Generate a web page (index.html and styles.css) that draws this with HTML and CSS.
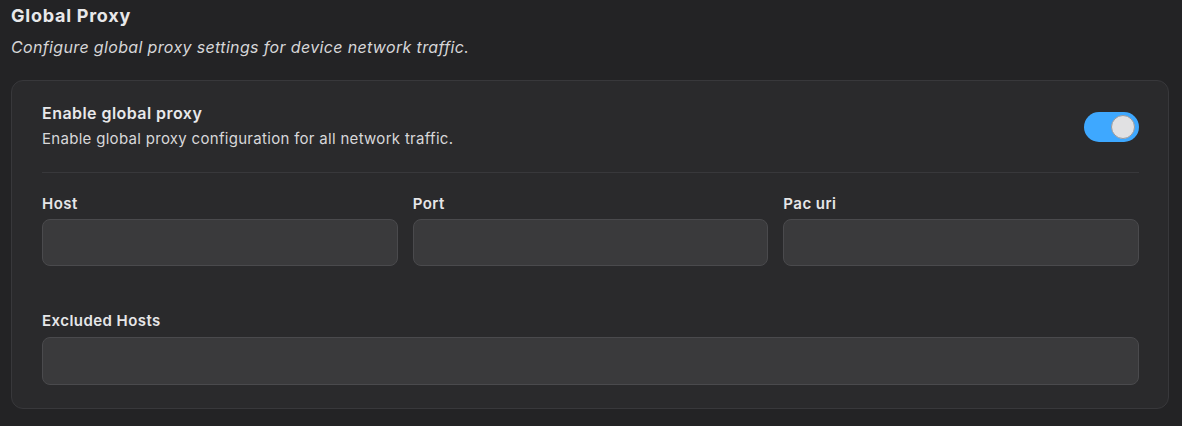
FILE: index.html
```html
<!DOCTYPE html>
<html lang="en">
<head>
<meta charset="utf-8">
<title>Global Proxy</title>
<link rel="stylesheet" href="styles.css">
</head>
<body>
<section class="page">
  <h1 class="title">Global Proxy</h1>
  <p class="subtitle">Configure global proxy settings for device network traffic.</p>
  <div class="card">
    <div class="toggle-row">
      <div class="toggle-text">
        <div class="toggle-title">Enable global proxy</div>
        <div class="toggle-desc">Enable global proxy configuration for all network traffic.</div>
      </div>
      <div class="switch on"><span class="knob"></span></div>
    </div>
    <div class="divider"></div>
    <div class="grid3">
      <label class="field"><span class="label">Host</span><input class="input" type="text"></label>
      <label class="field"><span class="label">Port</span><input class="input" type="text"></label>
      <label class="field"><span class="label">Pac uri</span><input class="input" type="text"></label>
    </div>
    <label class="field wide"><span class="label">Excluded Hosts</span><input class="input tall" type="text"></label>
  </div>
</section>
</body>
</html>
```

FILE: styles.css
```css
* { box-sizing: border-box; }
html, body { margin: 0; padding: 0; background: #232325; }
body {
  font-family: Inter, "Noto Sans", "Liberation Sans", sans-serif;
  color: #e6e6e8;
  width: 1182px;
  height: 426px;
  overflow: hidden;
}
.page { padding: 4px 13px 0 11px; }
.title {
  margin: 0;
  font-size: 18px;
  line-height: 24px;
  font-weight: 700;
  color: #e8e8ea;
  letter-spacing: 0.75px;
}
.subtitle {
  margin: 8px 0 0;
  font-size: 16px;
  line-height: 22px;
  font-style: italic;
  color: #d6d6d8;
  letter-spacing: 0.35px;
}
.card {
  margin-top: 22px;
  background: #2a2a2c;
  border: 1px solid #38383b;
  border-radius: 12px;
  padding: 21px 29px 23px 30px;
}
.toggle-row {
  display: flex;
  align-items: center;
  justify-content: space-between;
  padding-bottom: 23px;
}
.toggle-title {
  font-size: 16px;
  line-height: 22px;
  font-weight: 600;
  color: #e8e8ea;
  letter-spacing: 0.45px;
}
.toggle-desc {
  margin-top: 5px;
  font-size: 15px;
  line-height: 20px;
  color: #d8d8da;
  letter-spacing: 0.3px;
}
.switch {
  width: 55px;
  height: 30px;
  border-radius: 15px;
  background: #3ea8ff;
  position: relative;
  margin-top: 3px;
}
.knob {
  position: absolute;
  top: 3px;
  right: 4px;
  width: 24px;
  height: 24px;
  border-radius: 50%;
  background: #e1e1e3;
  border: 1px solid #9a9a9e;
}
.divider { height: 1px; background: #38383b; }
.grid3 {
  display: grid;
  grid-template-columns: 1fr 1fr 1fr;
  gap: 15px;
  margin-top: 21px;
}
.field { display: flex; flex-direction: column; }
.label {
  font-size: 15px;
  line-height: 20px;
  font-weight: 600;
  color: #e6e6e8;
  margin-bottom: 5px;
  letter-spacing: 0.45px;
}
.input {
  height: 47px;
  background: #3a3a3c;
  border: 1px solid #4a4a4d;
  border-radius: 8px;
  padding: 0 12px;
  color: #e6e6e8;
  font: inherit;
  outline: none;
}
.wide { margin-top: 45px; }
.wide .label { margin-bottom: 6px; }
.input.tall { height: 48px; }
```
